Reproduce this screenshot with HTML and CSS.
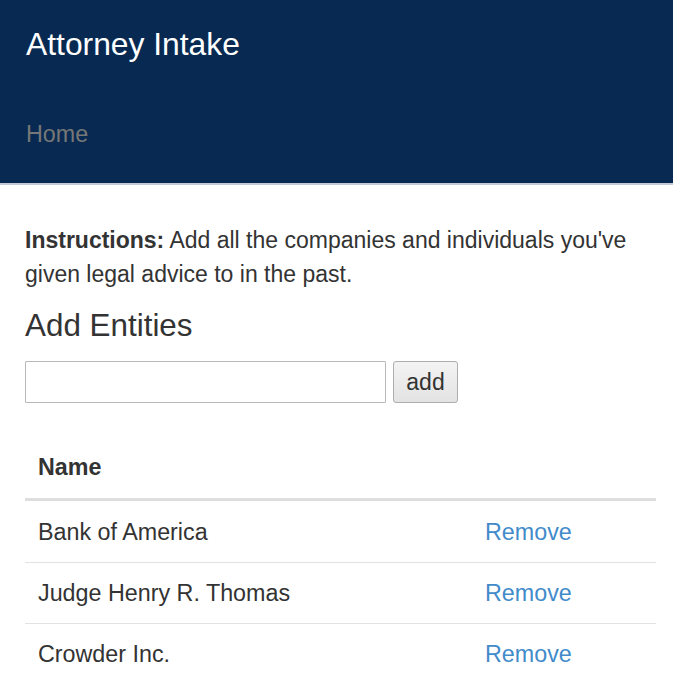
FILE: index.html
```html
<!DOCTYPE html>
<html>
<head>
<meta charset="utf-8">
<title>Attorney Intake</title>
<link rel="stylesheet" href="styles.css">
</head>
<body>
<header class="navbar">
  <div class="brand">Attorney Intake</div>
  <nav class="nav"><a class="nav-link" href="#">Home</a></nav>
</header>
<main class="container">
  <p class="instructions"><strong>Instructions:</strong> Add all the companies and individuals you've given legal advice to in the past.</p>
  <h3 class="heading">Add Entities</h3>
  <form class="add-form">
    <input class="entity-input" type="text">
    <button class="add-btn" type="button">add</button>
  </form>
  <table class="entities">
    <thead>
      <tr><th class="col-name">Name</th><th class="col-action"></th></tr>
    </thead>
    <tbody>
      <tr><td>Bank of America</td><td><a class="remove" href="#">Remove</a></td></tr>
      <tr><td>Judge Henry R. Thomas</td><td><a class="remove" href="#">Remove</a></td></tr>
      <tr><td>Crowder Inc.</td><td><a class="remove" href="#">Remove</a></td></tr>
    </tbody>
  </table>
</main>
</body>
</html>
```
FILE: styles.css
```css
html, body {
  margin: 0;
  padding: 0;
  background: #fff;
}
body {
  font-family: "Liberation Sans", Arial, sans-serif;
  font-size: 23.3px;
  line-height: 34px;
  color: #333;
}
.navbar {
  background: #082a52;
  height: 183px;
  border-bottom: 2px solid #c3cad5;
  padding: 0 26px;
  box-sizing: content-box;
}
.brand {
  color: #fff;
  font-size: 31.8px;
  height: 86px;
  line-height: 88px;
}
.nav {
  padding-top: 14px;
}
.nav-link {
  color: #777;
  text-decoration: none;
  font-size: 23.3px;
  line-height: 68px;
  display: block;
}
.container {
  padding: 38px 17px 0 25px;
}
.instructions {
  margin: 0;
  font-size: 23px;
  line-height: 34px;
}
.heading {
  margin: 18px 0 0;
  font-size: 31.4px;
  font-weight: normal;
  line-height: 34px;
  color: #333;
}
.add-form {
  display: flex;
  gap: 7px;
  margin-top: 18px;
}
.entity-input {
  width: 361px;
  height: 42px;
  box-sizing: border-box;
  border: 1px solid #b9b9b9;
  border-radius: 1px;
  margin: 0;
  padding: 0 6px;
  font: inherit;
}
.add-btn {
  height: 42px;
  width: 65px;
  box-sizing: border-box;
  border: 1px solid #adadad;
  border-radius: 3px;
  background: linear-gradient(#f3f3f3, #e3e3e3);
  font-family: "Liberation Sans", Arial, sans-serif;
  font-size: 23px;
  color: #333;
  padding: 0;
  margin: 0;
}
.entities {
  margin-top: 34px;
  width: 100%;
  border-collapse: collapse;
}
.entities th,
.entities td {
  text-align: left;
  padding: 13px;
  line-height: 34px;
}
.entities tbody tr:first-child td {
  padding-top: 14px;
}
.entities th {
  font-weight: bold;
  padding: 13px 13px 14px;
  border-bottom: 3px solid #dedede;
}
.entities tbody tr + tr td {
  border-top: 1px solid #e2e2e2;
}
.col-name {
  width: 421px;
}
.remove {
  color: #428bca;
  text-decoration: none;
}
```
